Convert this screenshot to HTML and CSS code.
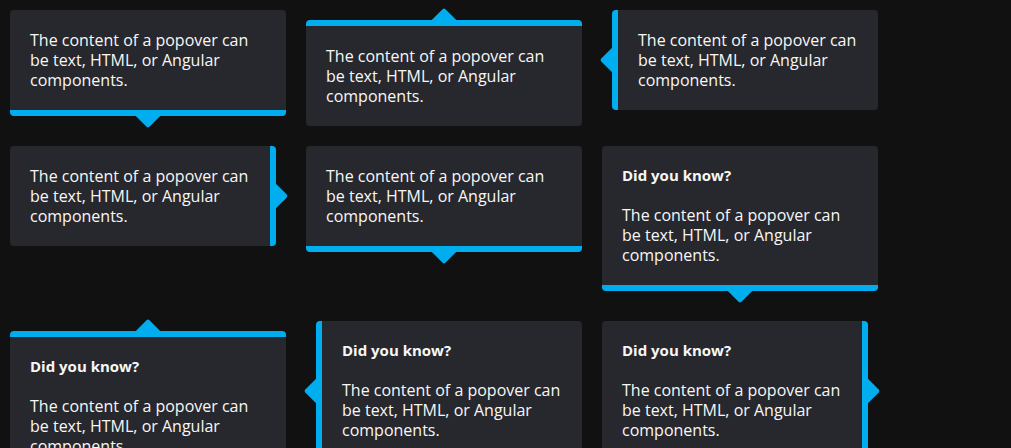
FILE: index.html
```html
<!DOCTYPE html>
<html lang="en">
<head>
<meta charset="utf-8">
<title>Popovers</title>
<link rel="stylesheet" href="styles.css">
</head>
<body>
<div class="grid">
  <div class="pop pop--bottom">
    <p class="pop__text">The content of a popover can be text, HTML, or Angular components.</p>
  </div>
  <div class="pop pop--top">
    <p class="pop__text">The content of a popover can be text, HTML, or Angular components.</p>
  </div>
  <div class="pop pop--left">
    <p class="pop__text">The content of a popover can be text, HTML, or Angular components.</p>
  </div>

  <div class="pop pop--right">
    <p class="pop__text">The content of a popover can be text, HTML, or Angular components.</p>
  </div>
  <div class="pop pop--bottom">
    <p class="pop__text">The content of a popover can be text, HTML, or Angular components.</p>
  </div>
  <div class="pop pop--bottom">
    <h3 class="pop__title">Did you know?</h3>
    <p class="pop__text">The content of a popover can be text, HTML, or Angular components.</p>
  </div>

  <div class="pop pop--top">
    <h3 class="pop__title">Did you know?</h3>
    <p class="pop__text">The content of a popover can be text, HTML, or Angular components.</p>
  </div>
  <div class="pop pop--left">
    <h3 class="pop__title">Did you know?</h3>
    <p class="pop__text">The content of a popover can be text, HTML, or Angular components.</p>
  </div>
  <div class="pop pop--right">
    <h3 class="pop__title">Did you know?</h3>
    <p class="pop__text">The content of a popover can be text, HTML, or Angular components.</p>
  </div>
</div>
</body>
</html>
```

FILE: styles.css
```css
html {
  background: #111112;
}

body {
  margin: 0;
  font-family: "Open Sans", "Noto Sans", sans-serif;
  color: #f7f7f7;
}

.grid {
  display: grid;
  grid-template-columns: repeat(3, 276px);
  column-gap: 20px;
  row-gap: 20px;
  padding: 10px;
  align-items: start;
}

.pop {
  position: relative;
  background: #27282d;
  border-radius: 4px;
  padding: 20px;
}

.pop::after {
  content: "";
  position: absolute;
  z-index: -1;
  width: 20px;
  height: 20px;
  background: #00aeef;
  border-radius: 2px;
  transform: rotate(45deg);
}

.pop--bottom {
  border-bottom: 6px solid #00aeef;
  margin-bottom: 10px;
}
.pop--bottom::after {
  left: 50%;
  margin-left: -10px;
  bottom: -14px;
}

.pop--top {
  border-top: 6px solid #00aeef;
  margin-top: 10px;
}
.pop--top::after {
  left: 50%;
  margin-left: -10px;
  top: -14px;
}

.pop--left {
  border-left: 6px solid #00aeef;
  margin-left: 10px;
}
.pop--left::after {
  top: 50%;
  margin-top: -10px;
  left: -14px;
}

.pop--right {
  border-right: 6px solid #00aeef;
  margin-right: 10px;
}
.pop--right::after {
  top: 50%;
  margin-top: -10px;
  right: -14px;
}

.pop__title {
  margin: 0 0 20px;
  font-size: 15px;
  line-height: 19px;
  font-weight: 700;
}

.pop__text {
  margin: 0;
  font-size: 16px;
  line-height: 20px;
}
```
